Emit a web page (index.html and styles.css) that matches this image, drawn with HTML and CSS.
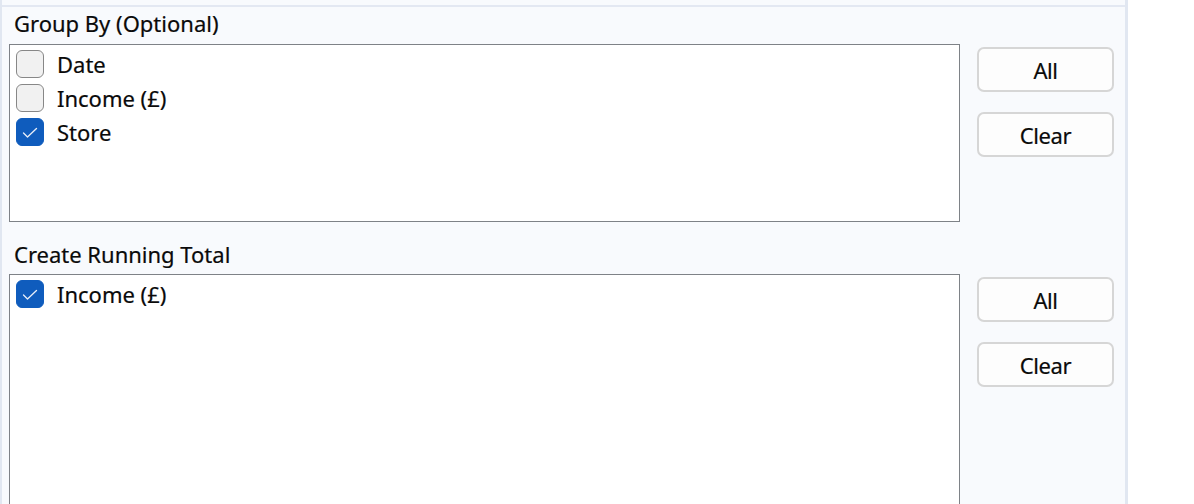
FILE: index.html
```html
<!DOCTYPE html>
<html>
<head>
<meta charset="utf-8">
<link rel="stylesheet" href="styles.css">
</head>
<body>
<div class="panel">
  <div class="group">
    <div class="label">Group By (Optional)</div>
    <div class="row">
      <div class="listbox short">
        <div class="item"><span class="cb"></span><span class="txt">Date</span></div>
        <div class="item"><span class="cb"></span><span class="txt">Income (£)</span></div>
        <div class="item"><span class="cb checked"><svg class="tick" viewBox="0 0 28 28" width="28" height="28"><path d="M7.5 15 L11.5 19 L20.5 10.5" fill="none" stroke="#e8eef8" stroke-width="1.3" stroke-linecap="round" stroke-linejoin="round"/></svg></span><span class="txt">Store</span></div>
      </div>
      <div class="buttons">
        <div class="btn">All</div>
        <div class="btn">Clear</div>
      </div>
    </div>
    <div class="label second">Create Running Total</div>
    <div class="row">
      <div class="listbox tall">
        <div class="item"><span class="cb checked"><svg class="tick" viewBox="0 0 28 28" width="28" height="28"><path d="M7.5 15 L11.5 19 L20.5 10.5" fill="none" stroke="#e8eef8" stroke-width="1.3" stroke-linecap="round" stroke-linejoin="round"/></svg></span><span class="txt">Income (£)</span></div>
      </div>
      <div class="buttons">
        <div class="btn">All</div>
        <div class="btn">Clear</div>
      </div>
    </div>
  </div>
</div>
</body>
</html>
```
FILE: styles.css
```css
html, body {
  margin: 0;
  padding: 0;
  background: #ffffff;
  overflow: hidden;
}
body {
  width: 1194px;
  height: 504px;
  font-family: "Noto Sans", "Liberation Sans", sans-serif;
  font-size: 22px;
  color: #0a0a0a;
  -webkit-text-stroke: 0.2px #0a0a0a;
}
.panel {
  width: 1123px;
  height: 504px;
  background: #f8fafd;
  border-left: 2px solid #e1e7f1;
  border-right: 3px solid #e1e7f1;
  box-sizing: content-box;
  overflow: hidden;
}
.group {
  margin-top: 5px;
  border-top: 2px solid #e3e8f2;
  display: flex;
  flex-direction: column;
}
.label {
  height: 37px;
  line-height: 32px;
  padding-left: 12px;
  box-sizing: border-box;
}
.label.second {
  margin-top: 16px;
  height: 36px;
}
.row {
  display: flex;
  align-items: flex-start;
  padding-left: 7px;
}
.listbox {
  width: 951px;
  background: #ffffff;
  border: 1px solid #7e8287;
  box-sizing: border-box;
  padding: 2px 0 0 6px;
}
.listbox.short { height: 178px; }
.listbox.tall { height: 260px; }
.item {
  height: 34px;
  display: flex;
  align-items: center;
}
.cb {
  width: 28px;
  height: 28px;
  box-sizing: border-box;
  border: 1.5px solid #878787;
  border-radius: 6px;
  background: #f1f1f1;
  position: relative;
  flex: none;
}
.cb.checked {
  background: #0f5cbd;
  border-color: #0f5cbd;
}
.tick {
  position: absolute;
  left: -1.5px;
  top: -1.5px;
}
.txt {
  margin-left: 13px;
}
.buttons {
  margin-left: 17px;
  padding-top: 3px;
  display: flex;
  flex-direction: column;
  gap: 20px;
}
.btn {
  width: 137px;
  height: 45px;
  box-sizing: border-box;
  border: 2px solid #d6d6d6;
  border-radius: 7px;
  background: #fdfdfd;
  display: flex;
  align-items: center;
  justify-content: center;
  letter-spacing: -0.4px;
}
```
